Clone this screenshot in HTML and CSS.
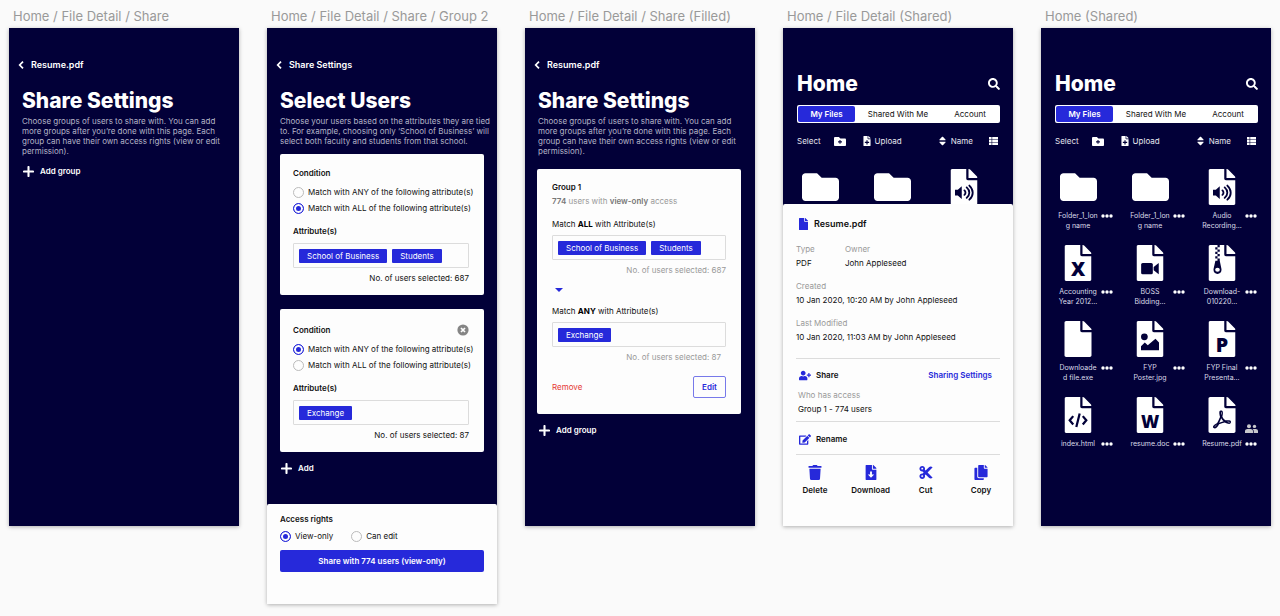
FILE: index.html
```html
<!DOCTYPE html>
<html lang="en">
<head>
<meta charset="utf-8">
<meta name="viewport" content="width=device-width, initial-scale=1">
<title>File sharing flow</title>
<link rel="stylesheet" href="styles.css">
</head>
<body>
<svg class="sprite" aria-hidden="true">
  <symbol id="i-back" viewBox="0 0 6 8"><path d="M5 .6 1.700 4 5 7.400" fill="none" stroke="currentColor" stroke-width="1.700"/></symbol>
  <symbol id="i-plus" viewBox="0 0 10 10"><path d="M5 .9v8.2M.9 5h8.2" fill="none" stroke="currentColor" stroke-width="1.9" stroke-linecap="round"/></symbol>
  <symbol id="i-close" viewBox="0 0 12 12"><circle cx="6" cy="6" r="5.6" fill="currentColor"/><path d="M4 4l4 4M8 4l-4 4" stroke="#fdfdfd" stroke-width="1.7"/></symbol>
  <symbol id="i-search" viewBox="0 0 512 512"><path fill="currentColor" d="M505 442.7L405.3 343c-4.5-4.5-10.6-7-17-7H372c27.6-35.3 44-79.7 44-128C416 93.1 322.9 0 208 0S0 93.1 0 208s93.1 208 208 208c48.3 0 92.7-16.4 128-44v16.3c0 6.4 2.5 12.5 7 17l99.7 99.7c9.4 9.4 24.6 9.4 33.9 0l28.3-28.3c9.4-9.4 9.4-24.6.1-34zM208 336c-70.7 0-128-57.2-128-128 0-70.7 57.2-128 128-128 70.7 0 128 57.2 128 128 0 70.7-57.2 128-128 128z"/></symbol>
  <symbol id="i-folder" viewBox="0 64 512 384"><path fill="currentColor" d="M464 128H272l-64-64H48C21.5 64 0 85.5 0 112v288c0 26.5 21.5 48 48 48h416c26.5 0 48-21.5 48-48V176c0-26.5-21.500-48-48-48z"/></symbol>
  <symbol id="i-folder-plus" viewBox="0 64 512 384"><use href="#i-folder" x="0" y="64" width="512" height="384"/><path d="M256 190v164M174 272h164" stroke="#020038" stroke-width="44"/></symbol>
  <symbol id="i-file" viewBox="0 0 384 512"><path fill="currentColor" d="M224 136V0H24C10.700 0 0 10.700 0 24v464c0 13.300 10.700 24 24 24h336c13.300 0 24-10.700 24-24V160H248c-13.200 0-24-10.800-24-24zm160-14.100v6.100H256V0h6.100c6.400 0 12.500 2.500 17 7l97.900 98c4.500 4.500 7 10.600 7 16.900z"/></symbol>
  <symbol id="i-file-plus" viewBox="0 0 384 512"><use href="#i-file" width="384" height="512"/><path d="M192 212v220M82 322h220" stroke="#020038" stroke-width="60"/></symbol>
  <symbol id="i-file-down" viewBox="0 0 384 512"><use href="#i-file" width="384" height="512"/><path fill="#fdfdfd" d="M160 224h64v96h76L192 432 84 320h76z"/></symbol>
  <symbol id="i-audio" viewBox="0 0 384 512"><use href="#i-file" width="384" height="512"/><path fill="#020038" d="M64 296h40l56-50v180l-56-50H64z"/><path d="M198 304c20 18 20 46 0 64M230 262c50 44 50 104 0 148M268 236c64 60 64 140 0 200" fill="none" stroke="#020038" stroke-width="26" stroke-linecap="round"/></symbol>
  <symbol id="i-video" viewBox="0 0 384 512"><use href="#i-file" width="384" height="512"/><rect x="66" y="256" width="166" height="160" rx="22" fill="#020038"/><path fill="#020038" d="M244 312l72-56v160l-72-56z"/></symbol>
  <symbol id="i-zip" viewBox="0 0 384 512"><use href="#i-file" width="384" height="512"/><path fill="#020038" d="M128 0h32v32h-32zM96 32h32v32H96zM128 64h32v32h-32zM96 96h32v32H96zM128 128h32v32h-32zM96 160h32v32H96zM128 192h32v32h-32zM98 224h62l22 106c12 50-14 82-54 82s-66-32-54-82z"/><ellipse cx="128" cy="352" rx="33" ry="27" fill="#fdfdfd"/></symbol>
  <symbol id="i-image" viewBox="0 0 384 512"><use href="#i-file" width="384" height="512"/><circle cx="112" cy="224" r="48" fill="#020038"/><path fill="#020038" d="M64 416v-58l54-54 42 40 110-92 50 52v112z"/></symbol>
  <symbol id="i-code" viewBox="0 0 384 512"><use href="#i-file" width="384" height="512"/><path d="M124 272l-50 60 50 60M260 272l50 60-50 60M216 236l-48 192" fill="none" stroke="#020038" stroke-width="32"/></symbol>
  <symbol id="i-pdf" viewBox="0 0 384 512"><path fill="currentColor" d="M181.900 256.100c-5-16-4.900-46.900-2-46.900 8.400 0 7.600 36.900 2 46.900zm-1.700 47.200c-7.700 20.200-17.300 43.300-28.400 62.700 18.300-7 39-17.200 62.900-21.900-12.700-9.600-24.900-23.400-34.500-40.800zM86.100 428.100c0 .8 13.200-5.400 34.900-40.200-6.700 6.300-29.100 24.500-34.900 40.200zM248 160h136v328c0 13.300-10.700 24-24 24H24c-13.300 0-24-10.700-24-24V24C0 10.700 10.700 0 24 0h200v136c0 13.200 10.800 24 24 24zm-8 171.800c-20-12.200-33.300-29-42.700-53.800 4.500-18.500 11.600-46.600 6.200-64.200-4.700-29.400-42.400-26.500-47.800-6.800-5 18.300-.4 44.100 8.100 77-11.600 27.600-28.700 64.600-40.800 85.800-.1 0-.1.1-.2.1-27.100 13.900-73.600 44.500-54.500 68 5.600 6.900 16 10 21.500 10 17.900 0 35.700-18 61.100-61.800 25.800-8.500 54.100-19.100 79-23.200 21.700 11.800 47.100 19.500 64 19.500 29.200 0 31.200-32 19.700-43.400-13.900-13.600-54.300-9.700-73.600-7.200zM377 105L279 7c-4.500-4.500-10.600-7-17-7h-6v128h128v-6.100c0-6.300-2.500-12.400-7-16.900zm-74.100 255.300c4.100-2.700-2.500-11.900-42.800-9 37.100 15.800 42.800 9 42.800 9z"/></symbol>
  <symbol id="i-sort" viewBox="0 40 320 432"><path fill="currentColor" d="M41 288h238c21.400 0 32.100 25.900 17 41L177 448c-9.400 9.400-24.600 9.400-33.900 0L24 329c-15.100-15.100-4.400-41 17-41zm255-105L177 64c-9.400-9.400-24.600-9.400-33.900 0L24 183c-15.100 15.100-4.400 41 17 41h238c21.400 0 32.100-25.900 17-41z"/></symbol>
  <symbol id="i-list" viewBox="0 0 9 8"><path fill="currentColor" d="M0 0h2.600v2.300H0zM3.200 0H9v2.300H3.200zM0 2.850h2.600v2.300H0zM3.200 2.850H9v2.300H3.200zM0 5.700h2.600V8H0zM3.200 5.700H9V8H3.200z"/></symbol>
  <symbol id="i-dots" viewBox="0 0 12 4"><g fill="currentColor"><circle cx="2" cy="2" r="1.700"/><circle cx="6" cy="2" r="1.700"/><circle cx="10" cy="2" r="1.700"/></g></symbol>
  <symbol id="i-people" viewBox="0 0 13 9"><g fill="currentColor"><circle cx="4" cy="2.200" r="2"/><circle cx="9.500" cy="2.400" r="1.700"/><path d="M0 9V7.200C0 5.700 1.200 5 2.400 5h3.200C6.900 5 8 5.800 8 7.200V9zM8.700 9V7.200c0-.9-.4-1.700-1-2.200h3C12 5 13 5.800 13 7.200V9z"/></g></symbol>
  <symbol id="i-user-plus" viewBox="0 0 640 512"><path fill="currentColor" d="M624 208h-64v-64c0-8.800-7.200-16-16-16h-32c-8.800 0-16 7.200-16 16v64h-64c-8.800 0-16 7.200-16 16v32c0 8.800 7.200 16 16 16h64v64c0 8.800 7.200 16 16 16h32c8.800 0 16-7.200 16-16v-64h64c8.800 0 16-7.200 16-16v-32c0-8.800-7.200-16-16-16zm-400 48c70.700 0 128-57.300 128-128S294.700 0 224 0 96 57.300 96 128s57.300 128 128 128zm89.600 32h-16.700c-22.200 10.200-46.900 16-72.900 16s-50.600-5.800-72.900-16h-16.700C60.200 288 0 348.200 0 422.400V464c0 26.500 21.500 48 48 48h352c26.500 0 48-21.500 48-48v-41.600c0-74.200-60.200-134.400-134.400-134.400z"/></symbol>
  <symbol id="i-edit" viewBox="0 0 576 512"><path fill="currentColor" d="M402.600 83.200l90.200 90.200c3.800 3.800 3.800 10 0 13.800L274.400 405.600l-92.800 10.300c-12.400 1.400-22.900-9.100-21.500-21.500l10.300-92.800L388.800 83.200c3.800-3.800 10-3.800 13.800 0zm162-22.900l-48.800-48.800c-15.200-15.200-39.900-15.200-55.200 0l-35.400 35.400c-3.800 3.800-3.800 10 0 13.800l90.200 90.200c3.800 3.800 10 3.800 13.800 0l35.400-35.400c15.200-15.300 15.200-40 0-55.200zM384 346.200V448H64V128h229.800c3.200 0 6.200-1.300 8.500-3.500l40-40c7.600-7.600 2.200-20.500-8.500-20.500H48C21.500 64 0 85.500 0 112v352c0 26.500 21.500 48 48 48h352c26.500 0 48-21.500 48-48V306.200c0-10.700-12.900-16-20.500-8.500l-40 40c-2.200 2.300-3.500 5.300-3.500 8.500z"/></symbol>
  <symbol id="i-trash" viewBox="0 0 448 512"><path fill="currentColor" d="M432 32H312l-9.400-18.700A24 24 0 0 0 281.100 0H166.800a23.720 23.720 0 0 0-21.400 13.300L136 32H16A16 16 0 0 0 0 48v32a16 16 0 0 0 16 16h416a16 16 0 0 0 16-16V48a16 16 0 0 0-16-16zM53.200 467a48 48 0 0 0 47.900 45h245.800a48 48 0 0 0 47.900-45L416 128H32z"/></symbol>
  <symbol id="i-copy" viewBox="0 0 448 512"><path fill="currentColor" d="M320 448v40c0 13.300-10.700 24-24 24H24c-13.300 0-24-10.700-24-24V120c0-13.300 10.700-24 24-24h72v296c0 30.900 25.100 56 56 56h168zm0-344V0H152c-13.300 0-24 10.700-24 24v368c0 13.300 10.700 24 24 24h272c13.300 0 24-10.700 24-24V128H344c-13.200 0-24-10.800-24-24zm121-31L375 7a24 24 0 0 0-17-7h-6v96h96v-6.100a24 24 0 0 0-7-16.900z"/></symbol>
  <symbol id="i-cut" viewBox="0 0 448 512"><path fill="currentColor" d="M278.060 256L444.480 89.570c4.690-4.690 4.690-12.290 0-16.970-32.800-32.800-85.990-32.800-118.790 0L210.180 188.120l-24.860-24.860c4.310-10.920 6.680-22.810 6.680-35.260 0-53.020-42.980-96-96-96S0 74.980 0 128s42.980 96 96 96c4.540 0 8.990-.32 13.360-.93L142.290 256l-32.930 32.930c-4.370-.61-8.830-.93-13.360-.93-53.020 0-96 42.980-96 96s42.980 96 96 96 96-42.980 96-96c0-12.450-2.370-24.340-6.680-35.260l24.860-24.860L325.690 439.400c32.800 32.800 85.990 32.800 118.790 0 4.690-4.680 4.690-12.280 0-16.970L278.060 256zM96 160c-17.640 0-32-14.360-32-32s14.360-32 32-32 32 14.360 32 32-14.360 32-32 32zm0 256c-17.640 0-32-14.360-32-32s14.360-32 32-32 32 14.360 32 32-14.360 32-32 32z"/></symbol>
</svg>

<main class="board">
  <section class="artboard">
    <h2 class="artboard-name">Home / File Detail / Share</h2>
    <div class="screen">
      <a class="back" href="#"><svg class="icon-back"><use href="#i-back"/></svg>Resume.pdf</a>
      <h1 class="title">Share Settings</h1>
      <p class="intro">Choose groups of users to share with. You can add<br>more groups after you’re done with this page. Each<br>group can have their own access rights (view or edit<br>permission).</p>
      <button class="add add-near" type="button"><svg class="icon-plus"><use href="#i-plus"/></svg>Add group</button>
    </div>
  </section>

  <section class="artboard">
    <h2 class="artboard-name">Home / File Detail / Share / Group 2</h2>
    <div class="screen">
      <a class="back" href="#"><svg class="icon-back"><use href="#i-back"/></svg>Share Settings</a>
      <h1 class="title">Select Users</h1>
      <p class="intro">Choose your users based on the attributes they are tied<br>to. For example, choosing only ‘School of Business’ will<br>select both faculty and students from that school.</p>
      <form class="rules">
        <div class="card">
          <h3 class="label">Condition</h3>
          <div class="choices">
            <label class="choice"><input class="radio" type="radio" name="c1">Match with ANY of the following attribute(s)</label>
            <label class="choice"><input class="radio" type="radio" name="c1" checked>Match with ALL of the following attribute(s)</label>
          </div>
          <h3 class="label">Attribute(s)</h3>
          <div class="tags"><span class="tag">School of Business</span><span class="tag">Students</span></div>
          <p class="count">No. of users selected: 687</p>
        </div>
        <div class="card card-removable">
          <div class="card-head"><h3 class="label">Condition</h3><button class="close" type="button" aria-label="Remove condition"><svg class="icon-close"><use href="#i-close"/></svg></button></div>
          <div class="choices">
            <label class="choice"><input class="radio" type="radio" name="c2" checked>Match with ANY of the following attribute(s)</label>
            <label class="choice"><input class="radio" type="radio" name="c2">Match with ALL of the following attribute(s)</label>
          </div>
          <h3 class="label">Attribute(s)</h3>
          <div class="tags"><span class="tag">Exchange</span></div>
          <p class="count">No. of users selected: 87</p>
        </div>
      </form>
      <button class="add" type="button"><svg class="icon-plus"><use href="#i-plus"/></svg>Add</button>
      <form class="rights">
        <h3 class="label">Access rights</h3>
        <div class="rights-row">
          <label class="choice"><input class="radio" type="radio" name="access" checked>View-only</label>
          <label class="choice"><input class="radio" type="radio" name="access">Can edit</label>
        </div>
        <button class="primary" type="button">Share with 774 users (view-only)</button>
      </form>
    </div>
  </section>

  <section class="artboard">
    <h2 class="artboard-name">Home / File Detail / Share (Filled)</h2>
    <div class="screen">
      <a class="back" href="#"><svg class="icon-back"><use href="#i-back"/></svg>Resume.pdf</a>
      <h1 class="title">Share Settings</h1>
      <p class="intro">Choose groups of users to share with. You can add<br>more groups after you’re done with this page. Each<br>group can have their own access rights (view or edit<br>permission).</p>
      <article class="group">
        <h3 class="label">Group 1</h3>
        <p class="group-sum"><strong>774</strong> users with <strong>view-only</strong> access</p>
        <p class="match">Match <b>ALL</b> with Attribute(s)</p>
        <div class="tags"><span class="tag">School of Business</span><span class="tag">Students</span></div>
        <p class="count count-muted">No. of users selected: 687</p>
        <div class="caret"></div>
        <p class="match match-next">Match <b>ANY</b> with Attribute(s)</p>
        <div class="tags"><span class="tag">Exchange</span></div>
        <p class="count count-muted count-inset">No. of users selected: 87</p>
        <div class="group-actions"><button class="remove" type="button">Remove</button><button class="edit" type="button">Edit</button></div>
      </article>
      <button class="add" type="button"><svg class="icon-plus"><use href="#i-plus"/></svg>Add group</button>
    </div>
  </section>

  <section class="artboard">
    <h2 class="artboard-name">Home / File Detail (Shared)</h2>
    <div class="screen screen-home">
      <div class="home-head"><h1 class="home-title">Home</h1><button class="plain" type="button" aria-label="Search"><svg class="icon-search"><use href="#i-search"/></svg></button></div>
      <nav class="tabs"><a class="tab tab-on" href="#">My Files</a><a class="tab" href="#">Shared With Me</a><a class="tab" href="#">Account</a></nav>
      <div class="tools">
        <button class="plain" type="button">Select</button>
        <button class="plain tool-folder" type="button" aria-label="New folder"><svg class="icon-tool-folder"><use href="#i-folder-plus"/></svg></button>
        <button class="plain" type="button"><svg class="icon-tool-file"><use href="#i-file-plus"/></svg>Upload</button>
        <button class="plain tool-sort" type="button"><svg class="icon-sort"><use href="#i-sort"/></svg>Name</button>
        <button class="plain" type="button" aria-label="List view"><svg class="icon-list"><use href="#i-list"/></svg></button>
      </div>
      <div class="files">
        <div class="file"><svg class="file-icon folder-icon"><use href="#i-folder"/></svg></div>
        <div class="file"><svg class="file-icon folder-icon"><use href="#i-folder"/></svg></div>
        <div class="file"><svg class="file-icon"><use href="#i-audio"/></svg></div>
      </div>
      <aside class="sheet">
        <h3 class="sheet-title"><svg class="icon-sheet-file"><use href="#i-file"/></svg>Resume.pdf</h3>
        <dl class="facts">
          <div><dt>Type</dt><dd>PDF</dd></div>
          <div><dt>Owner</dt><dd>John Appleseed</dd></div>
          <div class="fact-wide"><dt>Created</dt><dd>10 Jan 2020, 10:20 AM by John Appleseed</dd></div>
          <div class="fact-wide"><dt>Last Modified</dt><dd>10 Jan 2020, 11:03 AM by John Appleseed</dd></div>
        </dl>
        <div class="sheet-share">
          <div class="row"><svg class="icon-row"><use href="#i-user-plus"/></svg><span>Share</span><a class="row-link" href="#">Sharing Settings</a></div>
          <dl class="access"><dt>Who has access</dt><dd>Group 1 - 774 users</dd></dl>
        </div>
        <div class="sheet-rename"><button class="row" type="button"><svg class="icon-row"><use href="#i-edit"/></svg><span>Rename</span></button></div>
        <div class="actions">
          <button class="action" type="button"><svg class="icon-action"><use href="#i-trash"/></svg>Delete</button>
          <button class="action" type="button"><svg class="icon-action"><use href="#i-file-down"/></svg>Download</button>
          <button class="action" type="button"><svg class="icon-action"><use href="#i-cut"/></svg>Cut</button>
          <button class="action" type="button"><svg class="icon-action"><use href="#i-copy"/></svg>Copy</button>
        </div>
      </aside>
    </div>
  </section>

  <section class="artboard">
    <h2 class="artboard-name">Home (Shared)</h2>
    <div class="screen screen-home">
      <div class="home-head"><h1 class="home-title">Home</h1><button class="plain" type="button" aria-label="Search"><svg class="icon-search"><use href="#i-search"/></svg></button></div>
      <nav class="tabs"><a class="tab tab-on" href="#">My Files</a><a class="tab" href="#">Shared With Me</a><a class="tab" href="#">Account</a></nav>
      <div class="tools">
        <button class="plain" type="button">Select</button>
        <button class="plain tool-folder" type="button" aria-label="New folder"><svg class="icon-tool-folder"><use href="#i-folder-plus"/></svg></button>
        <button class="plain" type="button"><svg class="icon-tool-file"><use href="#i-file-plus"/></svg>Upload</button>
        <button class="plain tool-sort" type="button"><svg class="icon-sort"><use href="#i-sort"/></svg>Name</button>
        <button class="plain" type="button" aria-label="List view"><svg class="icon-list"><use href="#i-list"/></svg></button>
      </div>
      <div class="files">
        <div class="file"><svg class="file-icon folder-icon"><use href="#i-folder"/></svg><span class="file-name">Folder_1_lon<br>g name</span><button class="more" type="button" aria-label="More"><svg class="icon-dots"><use href="#i-dots"/></svg></button></div>
        <div class="file"><svg class="file-icon folder-icon"><use href="#i-folder"/></svg><span class="file-name">Folder_1_lon<br>g name</span><button class="more" type="button" aria-label="More"><svg class="icon-dots"><use href="#i-dots"/></svg></button></div>
        <div class="file"><svg class="file-icon"><use href="#i-audio"/></svg><span class="file-name">Audio<br>Recording...</span><button class="more" type="button" aria-label="More"><svg class="icon-dots"><use href="#i-dots"/></svg></button></div>
        <div class="file"><svg class="file-icon" viewBox="0 0 384 512"><use href="#i-file" width="384" height="512"/><text class="file-letter" x="192" y="440" text-anchor="middle">X</text></svg><span class="file-name">Accounting<br>Year 2012...</span><button class="more" type="button" aria-label="More"><svg class="icon-dots"><use href="#i-dots"/></svg></button></div>
        <div class="file"><svg class="file-icon"><use href="#i-video"/></svg><span class="file-name">BOSS<br>Bidding...</span><button class="more" type="button" aria-label="More"><svg class="icon-dots"><use href="#i-dots"/></svg></button></div>
        <div class="file"><svg class="file-icon"><use href="#i-zip"/></svg><span class="file-name">Download-<br>010220...</span><button class="more" type="button" aria-label="More"><svg class="icon-dots"><use href="#i-dots"/></svg></button></div>
        <div class="file"><svg class="file-icon"><use href="#i-file"/></svg><span class="file-name">Downloade<br>d file.exe</span><button class="more" type="button" aria-label="More"><svg class="icon-dots"><use href="#i-dots"/></svg></button></div>
        <div class="file"><svg class="file-icon"><use href="#i-image"/></svg><span class="file-name">FYP<br>Poster.jpg</span><button class="more" type="button" aria-label="More"><svg class="icon-dots"><use href="#i-dots"/></svg></button></div>
        <div class="file"><svg class="file-icon" viewBox="0 0 384 512"><use href="#i-file" width="384" height="512"/><text class="file-letter" x="192" y="440" text-anchor="middle">P</text></svg><span class="file-name">FYP Final<br>Presenta...</span><button class="more" type="button" aria-label="More"><svg class="icon-dots"><use href="#i-dots"/></svg></button></div>
        <div class="file"><svg class="file-icon"><use href="#i-code"/></svg><span class="file-name">index.html</span><button class="more" type="button" aria-label="More"><svg class="icon-dots"><use href="#i-dots"/></svg></button></div>
        <div class="file"><svg class="file-icon" viewBox="0 0 384 512"><use href="#i-file" width="384" height="512"/><text class="file-letter file-letter-wide" x="192" y="440" text-anchor="middle">W</text></svg><span class="file-name">resume.doc</span><button class="more" type="button" aria-label="More"><svg class="icon-dots"><use href="#i-dots"/></svg></button></div>
        <div class="file"><svg class="file-icon"><use href="#i-pdf"/></svg><svg class="icon-people"><use href="#i-people"/></svg><span class="file-name">Resume.pdf</span><button class="more" type="button" aria-label="More"><svg class="icon-dots"><use href="#i-dots"/></svg></button></div>
      </div>
    </div>
  </section>
</main>
</body>
</html>
```
FILE: styles.css
```css
:root {
  --navy: #020038;
  --blue: #2629da;
  --paper: #fdfdfd;
  --muted: #999;
  --line: #dcdcdc;
}

* { box-sizing: border-box; }

body {
  margin: 0;
  background: #fafafa;
  color: #111;
  font-family: Inter, "Liberation Sans", sans-serif;
  font-size: 8px;
  line-height: 10px;
}

h1, h2, h3, p, dl, dd { margin: 0; }
a { color: inherit; text-decoration: none; }
button { margin: 0; padding: 0; border: 0; background: none; color: inherit; font: inherit; cursor: pointer; }
svg { display: block; flex: none; }
.sprite { position: absolute; width: 0; height: 0; }

.board {
  display: grid;
  grid-template-columns: repeat(5, minmax(0, 1fr));
  align-items: start;
  gap: 28px;
  padding: 8px 9px;
}
.artboard-name {
  padding: 0 0 4px 4px;
  color: #999;
  font-size: 13px;
  font-weight: 400;
  line-height: 16px;
  white-space: nowrap;
}
.screen {
  position: relative;
  display: flex;
  flex-direction: column;
  min-height: 498px;
  padding-top: 31px;
  overflow: hidden;
  background: var(--navy);
  color: #fff;
  box-shadow: 0 1px 4px rgba(0, 0, 0, .3);
}

.back {
  display: flex;
  align-items: center;
  gap: 7px;
  padding-left: 9px;
  font-size: 9px;
  font-weight: 600;
  line-height: 12px;
}
.icon-back { width: 6px; height: 8px; }
.title { padding: 17px 13px 0; font-size: 21px; font-weight: 800; line-height: 26px; white-space: nowrap; }
.intro { padding: 2px 13px 0; color: #b4b4c6; white-space: nowrap; }
.add {
  display: flex;
  align-items: center;
  align-self: flex-start;
  gap: 6px;
  margin: 10px 14px 0;
  font-weight: 600;
  line-height: 12px;
}
.add-near { margin-top: 9px; }
.icon-plus { width: 11px; height: 11px; }

.rules { display: grid; grid-template-columns: minmax(0, 1fr); gap: 14px; margin: 8px 13px 0; }
.card, .group { border-radius: 2px; background: var(--paper); color: #111; }
.card { padding: 14px 15px 12px 13px; }
.card-removable { padding-top: 16px; }
.card-head { display: flex; justify-content: space-between; align-items: center; height: 10px; }
.icon-close { width: 12px; height: 12px; color: #858585; }
.label { color: #111; font-size: 8px; font-weight: 600; line-height: 10px; }
.choices { display: grid; gap: 4px; margin: 8px 0 12px; }
.choice { display: flex; align-items: center; gap: 4px; height: 12px; white-space: nowrap; }
.radio {
  flex: none;
  width: 11px;
  height: 11px;
  margin: 0;
  appearance: none;
  border: 1px solid #bbb;
  border-radius: 50%;
  background: var(--paper);
}
.radio:checked { border-color: var(--blue); background: var(--blue); box-shadow: inset 0 0 0 2px var(--paper); }
.tags {
  display: flex;
  align-items: center;
  gap: 5px;
  height: 25px;
  margin-top: 7px;
  padding: 0 5px;
  border: 1px solid var(--line);
  border-radius: 1px;
}
.tag { padding: 2px 8px; border-radius: 1px; background: var(--blue); color: #fff; white-space: nowrap; }
.count { margin-top: 5px; text-align: right; }
.count-muted { color: var(--muted); }
.count-inset { padding-right: 5px; }

.rights {
  flex: 1;
  margin-top: 30px;
  padding: 10px 13px 32px;
  border-radius: 2px 2px 0 0;
  background: var(--paper);
  color: #111;
}
.rights-row { display: flex; gap: 18px; margin: 6px 0 8px; }
.primary {
  display: block;
  width: 100%;
  height: 22px;
  border-radius: 2px;
  background: var(--blue);
  color: #fff;
  font-weight: 600;
}

.group { margin: 13px 14px 0 12px; padding: 13px 15px 16px; }
.group-sum { margin: 4px 0 13px; color: var(--muted); }
.group-sum strong { color: #777; font-weight: 600; }
.match b { color: #000; font-weight: 700; }
.match-next { margin-top: 14px; }
.group .tags { margin-top: 6px; }
.caret {
  width: 8px;
  height: 4px;
  margin: 13px 0 0 3px;
  background: var(--blue);
  clip-path: polygon(0 0, 100% 0, 50% 100%);
}
.group-actions { display: flex; justify-content: space-between; align-items: center; margin-top: 14px; }
.remove { color: #e53935; }
.edit { width: 33px; height: 22px; border: 1px solid #7779ea; border-radius: 2px; color: var(--blue); font-weight: 600; }

.screen-home { padding: 43px 13px 0 14px; }
.plain { display: flex; align-items: center; white-space: nowrap; }
.home-head { display: flex; justify-content: space-between; align-items: center; }
.home-title { font-size: 21px; font-weight: 800; line-height: 26px; }
.icon-search { width: 12px; height: 12px; }
.tabs {
  display: grid;
  grid-template-columns: 57px 1fr 58px;
  height: 18px;
  margin-top: 8px;
  padding: 1px;
  border-radius: 2px;
  background: #fff;
  color: #111;
}
.tab { display: grid; place-items: center; border-radius: 2px; white-space: nowrap; }
.tab-on { background: var(--blue); color: #fff; font-weight: 600; }
.tools { display: flex; align-items: center; height: 12px; margin-top: 12px; padding-right: 2px; color: #e6e6ee; }
.tools svg { color: #fff; }
.tools .plain { gap: 4px; }
.tools .tool-folder { margin: 0 17px 0 13px; }
.tools .tool-sort { gap: 5px; margin: 0 16px 0 auto; }
.icon-tool-folder { width: 12px; height: 9px; }
.icon-tool-file { width: 8px; height: 10px; }
.icon-sort { width: 7px; height: 10px; }
.icon-list { width: 9px; height: 8px; }

.files { display: grid; grid-template-columns: repeat(3, 1fr); gap: 14px; margin-top: 22px; padding-right: 1px; }
.file { display: grid; grid-template-columns: 1fr 12px; grid-template-rows: 36px auto; row-gap: 6px; }
.file-icon { width: 28px; height: 36px; justify-self: center; }
.folder-icon { width: 37px; }
.file-letter { fill: #020038; font-family: "Open Sans", sans-serif; font-size: 280px; font-weight: 800; }
.file-letter-wide { font-size: 250px; }
.file-name { grid-column: 1; grid-row: 2; justify-self: center; color: #dcdce8; font-size: 7px; text-align: center; white-space: nowrap; }
.more { grid-column: 2; grid-row: 2; height: 10px; }
.icon-dots { width: 12px; height: 4px; }
.icon-people { grid-column: 2; grid-row: 1; align-self: end; width: 13px; height: 9px; color: #c8c8cc; }

.sheet {
  position: absolute;
  right: 0;
  bottom: 0;
  left: 0;
  padding: 14px 13px 31px;
  border-radius: 2px 2px 0 0;
  background: var(--paper);
  color: #111;
}
.sheet-title { display: flex; align-items: center; gap: 6px; padding-left: 3px; font-size: 9px; font-weight: 600; line-height: 12px; }
.sheet svg { color: var(--blue); }
.icon-sheet-file { width: 9px; height: 12px; }
.facts { display: grid; grid-template-columns: 49px 1fr; row-gap: 13px; padding: 14px 0 16px; white-space: nowrap; }
.fact-wide { grid-column: 1 / -1; }
dt { color: var(--muted); }
dd { padding-top: 4px; }
.sheet-share, .sheet-rename, .actions { border-top: 1px solid var(--line); }
.sheet-share { padding: 10px 0 7px; }
.sheet-rename { padding: 11px 0 9px; }
.row { display: flex; align-items: center; gap: 5px; width: 100%; padding: 0 8px 0 3px; font-weight: 600; line-height: 12px; }
.row-link { margin-left: auto; color: var(--blue); }
.icon-row { width: 12px; height: 11px; }
.access { padding: 9px 0 0 2px; }
.actions { display: flex; justify-content: space-between; padding-top: 10px; }
.action { display: grid; justify-items: center; gap: 5px; width: 38px; font-weight: 600; }
.icon-action { width: 14px; height: 15px; }
```
